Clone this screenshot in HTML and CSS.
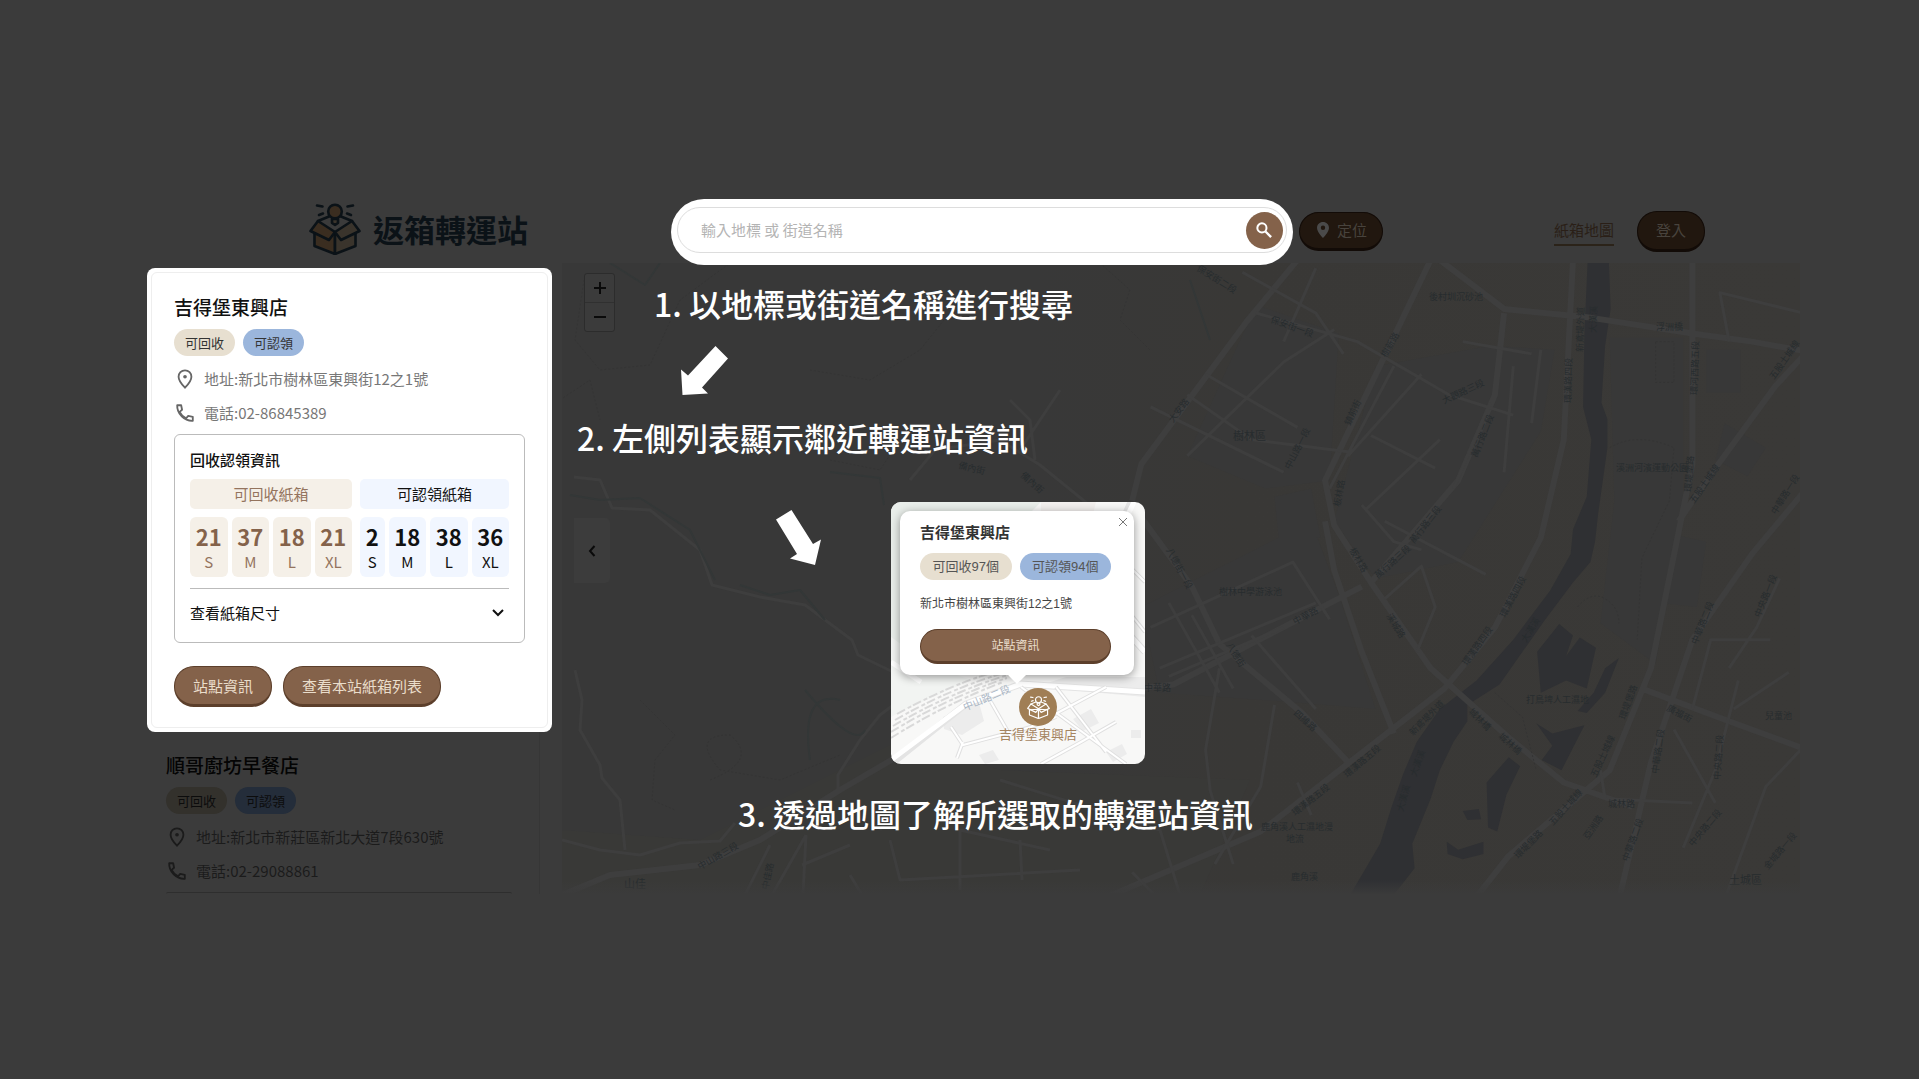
FILE: index.html
```html
<!DOCTYPE html>
<html lang="zh-Hant">
<head>
<meta charset="utf-8">
<meta name="viewport" content="width=device-width, initial-scale=1">
<title>返箱轉運站</title>
<link rel="stylesheet" href="styles.css">
</head>
<body>
<svg class="sprite" aria-hidden="true">
  <symbol id="i-box" viewBox="0 0 52 52">
    <g fill="var(--box-light, none)" stroke="currentColor" stroke-width="2.600" stroke-linejoin="round" stroke-linecap="round">
      <path d="M9 18 20 13.500M43 18 32 13.500" fill="none"/>
      <path d="M5.500 31v12l20.500 8V30z" fill="var(--box-dark, none)"/>
      <path d="M46.500 31v12l-20.500 8V30z"/>
      <path d="M9 18 26 29l-6 8L1.500 28z" fill="var(--box-dark, none)"/>
      <path d="M43 18 26 29l6 8L50.500 28z"/>
      <path d="M23 16v4l3 2 3-2v-4z"/>
      <circle cx="26" cy="8.500" r="6.800" fill="var(--box-dark, none)"/>
      <path d="M8 2.500l5.500 1M10 12l4-1.500M44 2.500l-5.500 1M42 12l-4-1.500" fill="none"/>
    </g>
  </symbol>
  <symbol id="i-pin" viewBox="0 0 24 24">
    <path d="M12 2.500c-4 0-7 3-7 7 0 4.800 7 12 7 12s7-7.200 7-12c0-4-3-7-7-7z" fill="none" stroke="currentColor" stroke-width="2"/>
    <circle cx="12" cy="9.500" r="2" fill="currentColor"/>
  </symbol>
  <symbol id="i-phone" viewBox="0 0 24 24">
    <path d="M3.500 3.500h4.300l1 5-2.700 2.300c1.600 3.200 3.900 5.500 7.100 7.100l2.300-2.700 5 1v4.300C11.500 21 3 12.500 3.500 3.500z" fill="none" stroke="currentColor" stroke-width="2" stroke-linejoin="round"/>
  </symbol>
</svg>

<div class="page">
  <header class="header">
    <a class="logo" href="#">
      <svg class="logo-icon" aria-hidden="true"><use href="#i-box"/></svg>
      <span>返箱轉運站</span>
    </a>
    <form class="search" role="search">
      <div class="search-field">
        <input type="text" aria-label="輸入地標 或 街道名稱" placeholder="輸入地標 或 街道名稱">
        <button class="search-btn" type="button" aria-label="搜尋">
          <svg viewBox="0 0 24 24" aria-hidden="true"><circle cx="9.500" cy="9.500" r="5.500" fill="none" stroke="currentColor" stroke-width="2.400"/><path d="M13.800 13.800 20.500 20.500" stroke="currentColor" stroke-width="2.800"/></svg>
        </button>
      </div>
    </form>
    <button class="btn btn-dim locate" type="button">
      <svg viewBox="0 0 12 16" aria-hidden="true"><path fill="currentColor" fill-rule="evenodd" d="M6 0C2.600 0 0 2.600 0 5.900 0 10 6 16 6 16s6-6 6-10.100C12 2.600 9.400 0 6 0zm0 8a2.200 2.200 0 1 1 0-4.400A2.200 2.200 0 0 1 6 8z"/></svg>
      定位
    </button>
    <nav class="nav">
      <a href="#">紙箱地圖</a>
      <button class="btn btn-dim login" type="button">登入</button>
    </nav>
  </header>

  <main class="main">
    <aside class="sidebar">
      <section class="card">
        <article class="station">
          <h2>吉得堡東興店</h2>
          <div class="tags"><span class="tag tag-sand">可回收</span><span class="tag tag-blue">可認領</span></div>
          <p class="line"><svg aria-hidden="true"><use href="#i-pin"/></svg>地址:新北市樹林區東興街12之1號</p>
          <p class="line"><svg aria-hidden="true"><use href="#i-phone"/></svg>電話:02-86845389</p>
          <div class="stock">
            <h3>回收認領資訊</h3>
            <div class="groups">
              <div class="group sand">
                <h4>可回收紙箱</h4>
                <ul><li><b>21</b>S</li><li><b>37</b>M</li><li><b>18</b>L</li><li><b>21</b>XL</li></ul>
              </div>
              <div class="group sky">
                <h4>可認領紙箱</h4>
                <ul><li><b>2</b>S</li><li><b>18</b>M</li><li><b>38</b>L</li><li><b>36</b>XL</li></ul>
              </div>
            </div>
            <button class="sizes" type="button">查看紙箱尺寸
              <svg viewBox="0 0 12 8" aria-hidden="true"><path d="M1 1l5 5 5-5" fill="none" stroke="currentColor" stroke-width="2"/></svg>
            </button>
          </div>
          <div class="actions">
            <button class="btn" type="button">站點資訊</button>
            <button class="btn" type="button">查看本站紙箱列表</button>
          </div>
        </article>
      </section>
      <article class="station next">
        <h2>順哥廚坊早餐店</h2>
        <div class="tags"><span class="tag tag-sand">可回收</span><span class="tag tag-blue">可認領</span></div>
        <p class="line"><svg aria-hidden="true"><use href="#i-pin"/></svg>地址:新北市新莊區新北大道7段630號</p>
        <p class="line"><svg aria-hidden="true"><use href="#i-phone"/></svg>電話:02-29088861</p>
        <div class="stock-edge"></div>
      </article>
    </aside>

    <section class="map" aria-label="地圖">
      <svg class="map-base" viewBox="562 263 1238 632" preserveAspectRatio="xMinYMin slice" aria-hidden="true">
        <defs>
          <linearGradient id="land"><stop offset="0" stop-color="#383838"/><stop offset=".38" stop-color="#383838"/><stop offset=".55" stop-color="#393836"/><stop offset="1" stop-color="#3a3937"/></linearGradient>
          <linearGradient id="fade" x2="0" y2="1"><stop offset="0" stop-color="#3b3b3b" stop-opacity="0"/><stop offset="1" stop-color="#3b3b3b"/></linearGradient>
        </defs>
        <rect x="562" y="263" width="1238" height="632" fill="url(#land)"/>
        <path d="M562 830 700 840 900 740 1000 770 1250 780 1200 895H562z" fill="#393937"/>
        <!-- built-up areas -->
        <g transform="translate(1100 260) scale(.4592 .4082)" fill="#383838">
          <path d="M340 110 520 180 500 540 360 560 190 480zM600 260 850 210 990 220 960 420 780 740 600 780 510 640zM90 850 460 640 520 820 560 960 600 1100 380 1080 130 1060zM1110 190h160v420l-60 380-120-100 30-300zM1240 670l80 20-20 160-80-10zM1320 220h75v105h-75zM380 580l80-20 20 120-90 10zM1360 400l90 60-40 70-70-40z"/>
        </g>
        <!-- river and wetland -->
        <g transform="translate(1100 260) scale(.4592 .4082)" fill="#2f3033">
          <path d="M1062 0 1055 180 1052 360 1070 440 1060 580 1030 660 1025 720 980 810 900 930 820 1030 740 1100 690 1180 660 1260 635 1340 610 1430 545 1555H640L685 1490 680 1430 720 1320 740 1250 770 1180 800 1130 800 1090 870 1040 920 960 970 880 1030 790 1068 740 1078 690 1085 620 1105 460 1105 390 1092 350 1100 210 1112 120 1108 0z"/>
          <path d="M1000 892 1030 920 1015 970 1045 925 1080 950 1060 1050 1015 1030 960 1060 952 960zM950 1135 985 1160 1055 1140 1005 1250 962 1225 985 1190zM890 1218 915 1240 885 1310 865 1400 845 1390 842 1280zM755 1425 780 1445 835 1425 835 1455 790 1468 757 1455zM1130 975 1100 1000 1075 1060 1040 1105 1060 1110 1100 1060zM790 1350 825 1345 830 1370 800 1372z"/>
        </g>
        <!-- roads, eastern half -->
        <g class="roads" transform="translate(1100 260) scale(.4592 .4082)">
          <path class="major" d="M430 0 320 150 90 500 70 590M70 600 200 800 260 940 440 1110 540 1230M740 0 880 120 1060 140 1290 180 1420 200 1568 230M720 0 520 470 490 540 510 650 590 790 720 1000 890 1170 1010 1280 1160 1340M490 640 510 760 570 960 640 1160M0 1060 160 1040 330 940 570 800M880 130 860 330 780 540 590 790M0 1568 350 1400 750 1050 860 900 960 680 1010 440 1030 0M1290 0 1290 500 1200 1000 1110 1250 890 1460 820 1560M1568 520 1420 720 1290 930 1200 1230 1130 1568M1568 190 1470 310 1340 510 1260 640M1180 1050 1370 1130 1540 1200"/>
          <path d="M190 480 400 250 510 170M110 360 400 520M190 330 330 440 540 470M230 280 430 410M340 130 560 200 760 330 900 380M310 30 470 130 530 230M470 20 400 200M640 260 500 560M790 200 940 230M850 350 770 560M700 280 540 480M590 430 730 510M580 610 740 440M620 640 840 770M570 600 640 690 700 710M620 830 700 750 730 850 690 960M110 900 420 740 500 880M130 1000 470 840M200 870 290 1050M150 840 260 1060M330 920 470 1100M260 1000 230 1200 240 1300 290 1480M380 1090 350 1290 250 1480M900 260 880 520M960 220 940 400M150 1020 400 900M70 1500 130 1568M430 1280 460 1360M1370 200 1350 80 1568 140M1460 930 1330 930 1290 1100M1390 1030 1340 1250 1270 1440M1250 1150 1340 1330M1500 1010 1380 1100M1090 1250 1100 1320 1290 1330M1568 1150 1450 1290 1360 1568M1480 780 1430 900 1370 1000"/>
          <path class="fine" d="M1110 460q60-40 140 0l-10 130-60 140-10 200M1210 200h40v100h-40zM1040 850q30-40 60-20t30 60M860 1060l60 60 30 130"/>
        </g>
        <!-- roads, western half -->
        <g class="roads">
          <path class="major" d="M562 895 610 875 700 865 760 840 840 790 900 755 1000 690 1145 700"/>
          <path d="M574 477 600 480 612 508 650 510 700 550 712 585 760 597 805 605 852 640 858 655 893 672 960 700M575 670 582 700 580 730 600 765 602 778 620 800 625 850M562 840 600 850 640 855 680 843 720 841 735 823M838 790 838 775 860 740 880 715 900 700M806 835 772 895M770 845 745 895M806 835 803 895M802 865 850 845M850 875 862 895M910 480 935 450 1000 440 1040 465 1120 530M1035 460 1030 420 1010 400M1060 390 1020 450M900 800 880 830M1000 780 1160 830 1180 895M960 890 960 830 1050 850M890 840 900 880 1080 870M1020 840 1022 880"/>
          <path class="fine" d="M584 280 575 340 600 370 650 365 680 300 730 263M640 700 675 735 655 760 652 800 675 810M710 780q50-20 20-45-40 0-10 35l60 10 60-25M810 370 870 380 920 350 960 300 1000 290M830 460 880 470 900 440M560 400 590 380 600 420M1100 263 1130 290 1120 320 1150 350"/>
          <path class="stream" d="M610 263 645 285 660 263M570 495 600 500 640 498 690 530 715 580M830 472 880 478 884 505M740 585 770 595 800 590 825 620M840 700q-40-10-30 60M805 690q50 60 60 40M1190 280l20 60"/>
        </g>
        <g class="labels">
          <text x="1429" y="300">後村圳沉砂池</text>
          <text x="1233" y="440" class="district">樹林區</text>
          <text x="1219" y="595">樹林中學游泳池</text>
          <text x="1616" y="471">溪洲河濱運動公園</text>
          <text x="1526" y="703">打鳥埤人工濕地</text>
          <text x="1261" y="830">鹿角溪人工濕地漫</text>
          <text x="1286" y="842">地流</text>
          <text x="1291" y="880">鹿角溪</text>
          <text x="1765" y="719">兒童池</text>
          <text x="1729" y="884" class="district">土城區</text>
          <text x="624" y="888" class="district">山佳</text>
          <text x="1656" y="330">浮洲橋</text>
          <text x="1608" y="807">城林路</text>
          <text x="1144" y="691">中華路</text>
          <text transform="translate(1196 270) rotate(32)">保安街二段</text>
          <text transform="translate(1270 322) rotate(20)">保安街一段</text>
          <text transform="translate(1386 358) rotate(-60)">樹新路</text>
          <text transform="translate(1350 426) rotate(-65)">鎮前街</text>
          <text transform="translate(1173 423) rotate(-52)">大安路</text>
          <text transform="translate(1290 470) rotate(-63)">中山路一段</text>
          <text transform="translate(1444 404) rotate(-25)">大觀路三段</text>
          <text transform="translate(1477 458) rotate(-68)">萬行路二段</text>
          <text transform="translate(1414 544) rotate(-52)">萬行路三段</text>
          <text transform="translate(1378 579) rotate(-42)">萬行路三段</text>
          <text transform="translate(1340 507) rotate(-80)">板林路</text>
          <text transform="translate(1349 550) rotate(60)">板林路</text>
          <text transform="translate(1386 616) rotate(58)">溪城路</text>
          <text transform="translate(1166 550) rotate(62)">八德街一段</text>
          <text transform="translate(1226 645) rotate(58)">八德街</text>
          <text transform="translate(1295 625) rotate(-28)">中華路</text>
          <text transform="translate(1293 714) rotate(42)">四維路</text>
          <text transform="translate(1347 778) rotate(-40)">環漢路五段</text>
          <text transform="translate(1295 816) rotate(-38)">環漢路五段</text>
          <text transform="translate(1413 736) rotate(-45)">新鳶堤外道</text>
          <text transform="translate(1467 666) rotate(-55)">環漢路四段</text>
          <text transform="translate(1505 618) rotate(-62)">環漢路四段</text>
          <text transform="translate(1571 403) rotate(-89)">環漢路四段</text>
          <text transform="translate(1583 352) rotate(-89)">新鳶堤外道</text>
          <text transform="translate(1596 333) rotate(-88)">大漢溪</text>
          <text transform="translate(1526 643) rotate(-58)">大漢溪</text>
          <text transform="translate(1416 777) rotate(-70)">大漢溪</text>
          <text transform="translate(1403 812) rotate(-75)">大漢溪</text>
          <text transform="translate(1468 712) rotate(45)">城林橋</text>
          <text transform="translate(1498 737) rotate(42)">城林橋</text>
          <text transform="translate(1697 395) rotate(-88)">環河西路五段</text>
          <text transform="translate(1691 492) rotate(-86)">環堤堡路</text>
          <text transform="translate(1694 504) rotate(-55)">五股土城線</text>
          <text transform="translate(1774 380) rotate(-55)">五股土城線</text>
          <text transform="translate(1776 515) rotate(-58)">中華路一段</text>
          <text transform="translate(1697 645) rotate(-68)">中華路二段</text>
          <text transform="translate(1760 618) rotate(-68)">中央路一段</text>
          <text transform="translate(1625 720) rotate(-70)">環堤堡路</text>
          <text transform="translate(1596 778) rotate(-65)">五股土城線</text>
          <text transform="translate(1553 826) rotate(-48)">五股土城線</text>
          <text transform="translate(1518 859) rotate(-45)">環堤堡路</text>
          <text transform="translate(1658 774) rotate(-82)">中華路二段</text>
          <text transform="translate(1628 862) rotate(-70)">中華路二段</text>
          <text transform="translate(1666 710) rotate(28)">廣福街</text>
          <text transform="translate(1720 780) rotate(-86)">中央路二段</text>
          <text transform="translate(1693 847) rotate(-50)">中央路二段</text>
          <text transform="translate(1768 870) rotate(-50)">金城路一段</text>
          <text transform="translate(1588 840) rotate(-55)">亞洲路</text>
          <text transform="translate(700 870) rotate(-30)">中山路三段</text>
          <text transform="translate(768 890) rotate(-78)">中佳路</text>
          <text transform="translate(958 468) rotate(14)">備內街</text>
          <text transform="translate(1020 476) rotate(42)">備內街</text>
        </g>
        <rect x="562" y="880" width="1238" height="15" fill="url(#fade)"/>
      </svg>

      <div class="zoom">
        <button type="button" aria-label="放大"><svg viewBox="0 0 12 12"><path d="M6 0v12M0 6h12"/></svg></button>
        <button type="button" aria-label="縮小"><svg viewBox="0 0 12 12"><path d="M0 6h12"/></svg></button>
      </div>
      <button class="collapse" type="button" aria-label="收合列表"><svg viewBox="0 0 8 12"><path d="M6.500 1 2 6l4.500 5"/></svg></button>

      <p class="step step-1">1. 以地標或街道名稱進行搜尋</p>
      <svg class="arrow arrow-1" viewBox="0 0 48 49" aria-hidden="true"><path d="M34.500 0 47 12.500 21 41.500 27 47.500 1.500 49 0 23.500 7 29.500z"/></svg>
      <p class="step step-2">2. 左側列表顯示鄰近轉運站資訊</p>
      <svg class="arrow arrow-2" viewBox="0 0 45 55" aria-hidden="true"><path d="M15.500 0 0 9.500 21 44 14 48.500 39 55 45 29.500 37 34z"/></svg>
      <p class="step step-3">3. 透過地圖了解所選取的轉運站資訊</p>

      <div class="preview">
        <svg class="preview-map" viewBox="0 0 254 262" aria-hidden="true">
          <rect width="254" height="262" fill="#f8f8f7"/>
          <path d="M0 0h150l-30 30L50 150 0 215z" fill="#e9eeea"/>
          <path d="M0 135Q40 165 80 178L20 205 0 215z" fill="#f2f4f2"/>
          <path d="M150 0h55l-5 20h-50z" fill="#f3f0ee"/>
          <path d="M175 175h79v20l-110-10zM52 215l35-18 6 22-22 14-18-6zM182 217l18-10 8 14-16 8zM215 250l16-8 5 10-14 8zM88 253l14-5 6 10-14 4zM240 228h10v8h-10z" fill="#ececec"/>
          <g fill="none" stroke="#e4e4e4" stroke-width="7"><path d="M0 262 75 202 130 182 254 190M240 0 200 90 254 150"/></g>
          <g fill="none" stroke="#fff" stroke-width="5"><path d="M0 258 75 202 130 182 254 190M243 0 200 90 254 150M0 160 30 180"/></g>
          <g fill="none" stroke="#e0e0e0" stroke-width="4"><path d="M130 185 235 262M60 225 72 243 140 225 165 215M72 240 66 256M165 185 215 250M140 225 215 185M150 262 190 240 225 220M100 200 120 235M234 60 254 80M230 100 254 130"/></g>
          <g fill="none" stroke="#fff" stroke-width="2"><path d="M130 185 235 262M60 225 72 243 140 225 165 215M72 240 66 256M165 185 215 250M140 225 215 185M150 262 190 240 225 220M100 200 120 235M234 60 254 80M230 100 254 130"/></g>
          <path d="M2 224Q60 190 120 172M6 212Q60 182 110 168M0 236Q50 204 112 180M4 218Q60 186 116 170M0 230Q56 196 116 176" fill="none" stroke="#d9d9d9" stroke-width="2" stroke-dasharray="9 3 4 2"/>
          <text transform="translate(74 209) rotate(-23)" class="road-name">中山路二段</text>
        </svg>
        <div class="popup">
          <button class="close" type="button" aria-label="關閉"><svg viewBox="0 0 8 8"><path d="M0 0l8 8M8 0 0 8"/></svg></button>
          <h2>吉得堡東興店</h2>
          <div class="tags"><span class="tag tag-sand">可回收97個</span><span class="tag tag-blue">可認領94個</span></div>
          <p>新北市樹林區東興街12之1號</p>
          <button class="btn" type="button">站點資訊</button>
        </div>
        <div class="marker">
          <span class="marker-dot"><svg aria-hidden="true"><use href="#i-box"/></svg></span>
          吉得堡東興店
        </div>
      </div>
    </section>
  </main>
</div>
</body>
</html>
```

FILE: styles.css
```css
:root {
  --shade: #3b3b3b;
  --brown: #84624a;
  --brown-dark: #5c3f2b;
  --cream: #eaddcb;
  --sand: #e7dfd0;
  --blue: #9bb6dc;
}

* { box-sizing: border-box; }

body {
  margin: 0;
  min-height: 100vh;
  background: var(--shade);
  color: #111;
  font: 15px/24px "Noto Sans CJK TC", "Noto Sans", sans-serif;
}

h2, h3, h4, p, ul { margin: 0; padding: 0; font-weight: 400; }
ul { list-style: none; }
button, input { font: inherit; }
button { border: 0; padding: 0; background: none; color: inherit; }
.sprite { position: absolute; width: 0; height: 0; }

.page { padding: 199px 119px 0 147px; }

/* Buttons */
.btn {
  height: 41px;
  padding: 0 18px;
  border: 1px solid var(--brown-dark);
  border-bottom-width: 3px;
  border-radius: 20px;
  background: var(--brown);
  color: var(--cream);
  white-space: nowrap;
}
.btn-dim { border-color: #120b07; background: #21170f; color: #48433d; }

/* Header */
.header { position: relative; z-index: 1; display: flex; align-items: center; height: 64px; padding: 0 95px 0 162px; }
.logo {
  display: flex;
  align-items: center;
  gap: 12px;
  width: 362px;
  height: 56px;
  padding-bottom: 4px;
  color: #0b1217;
  font-size: 31px;
  font-weight: 700;
  line-height: 48px;
  text-decoration: none;
}
.logo-icon { width: 52px; height: 52px; --box-dark: #3a2d20; --box-light: #3a342c; }

.search {
  flex: 1;
  align-self: flex-start;
  height: 66px;
  padding: 8px 6px 12px;
  border-radius: 33px;
  background: #fff;
}
.search-field {
  display: flex;
  align-items: center;
  height: 46px;
  padding: 0 3px 0 23px;
  border: 1px solid #ddd;
  border-radius: 23px;
}
.search-field input { flex: 1; min-width: 0; border: 0; padding: 0; outline: 0; background: none; }
.search-field input::placeholder { color: #b4b4b4; opacity: 1; }
.search-btn { display: grid; place-items: center; width: 37px; height: 37px; border-radius: 50%; background: var(--brown); color: #fff; }
.search-btn svg { width: 20px; height: 20px; }

.locate { display: flex; align-items: center; gap: 8px; height: 39px; margin-left: 6px; padding: 0 15px 0 17px; }
.locate svg { width: 12px; height: 16px; color: #4a4a4a; }

.nav { display: flex; align-items: center; gap: 23px; margin-left: 171px; }
.nav a { border-bottom: 2px solid #2b2319; color: #2a1f17; line-height: 28px; text-decoration: none; white-space: nowrap; }

/* Layout */
.main { display: flex; gap: 10px; }
.sidebar { flex: none; width: 405px; padding-top: 5px; }
.map { position: relative; flex: 1; min-width: 0; overflow: hidden; }

/* Station cards */
.card { padding: 4px; border-radius: 8px; background: #fff; }
.card .station { padding: 20px 22px; border: 1px solid #eee; border-radius: 6px; }
.station h2 { color: #111; font-size: 19px; font-weight: 500; line-height: 28px; }
.tags { display: flex; gap: 8px; margin-top: 8px; }
.tag { height: 27px; padding: 0 11px; border-radius: 14px; color: #333; font-size: 13px; line-height: 27px; }
.tag-sand { background: var(--sand); }
.tag-blue { background: var(--blue); }
.line { display: flex; align-items: center; gap: 8px; margin-top: 10px; color: #777; }
.line svg { width: 22px; height: 22px; color: #666; }
.tags + .line { margin-top: 11px; }

.stock { margin-top: 9px; padding: 13px 15px 17px; border: 1px solid #bbb; border-radius: 6px; }
.stock h3 { font-size: 15px; font-weight: 500; }
.groups { display: flex; gap: 8px; margin-top: 7px; padding-bottom: 11px; border-bottom: 1px solid #bbb; }
.group { flex: auto; text-align: center; }
.group h4 { border-radius: 5px; font-size: 15px; line-height: 30px; }
.group ul { display: flex; gap: 4px; margin-top: 8px; }
.group li { flex: auto; height: 60px; padding: 5px 5px 0; border-radius: 6px; }
.group b { display: block; font-size: 22px; line-height: 28px; }
.sand h4, .sand li { background: #f5f0e8; color: #94745e; }
.sand b { color: #84624a; }
.sky h4, .sky li { background: #f1f6ff; }
.sizes { display: flex; align-items: center; justify-content: space-between; width: 100%; margin-top: 12px; padding-right: 5px; }
.sizes svg { width: 12px; height: 8px; }
.actions { display: flex; gap: 11px; margin-top: 23px; }

.next { margin-right: 12px; padding: 19px 27px 0 19px; border-right: 1px solid #363636; }
.next h2 { color: #040404; }
.next .tag { color: #0c0c0c; }
.next .tag-sand { background: #33312c; }
.next .tag-blue { background: #242d3a; }
.next .line, .next .line svg { color: #1b1b1b; }
.stock-edge { height: 2px; margin-top: 9px; border-top: 1px solid #2e2e2e; border-radius: 6px 6px 0 0; }

/* Map */
.map-base { position: absolute; inset: 0; width: 100%; height: 100%; }
.roads { fill: none; stroke: #3e3e3e; stroke-width: 3; stroke-linejoin: round; }
.roads path { vector-effect: non-scaling-stroke; }
.roads .major { stroke-width: 6; }
.roads .fine { stroke: #343434; stroke-width: 1; stroke-dasharray: 2 2; }
.roads .stream { stroke: #333737; stroke-width: 2; }
.labels { fill: #272c2e; font-size: 9px; }
.labels .district { font-size: 11px; }

.zoom { position: absolute; left: 22px; top: 10px; width: 31px; border: 1px solid #2c2c2c; border-radius: 3px; background: #3b3b3b; }
.zoom button { display: grid; place-items: center; width: 100%; height: 28px; }
.zoom button + button { height: 29px; border-top: 1px solid #303030; }
.zoom svg { width: 12px; height: 12px; }
.zoom path, .collapse path, .close path { fill: none; stroke: #0a0a0a; stroke-width: 2; }
.collapse { position: absolute; left: 12px; top: 255px; display: grid; place-items: center; width: 36px; height: 65px; border-radius: 0 5px 5px 0; background: #3c3c3c; }
.collapse svg { width: 8px; height: 12px; }

/* Guide annotations */
.step { position: absolute; color: #fff; font-size: 32px; font-weight: 500; line-height: 40px; white-space: nowrap; }
.step-1 { left: 92px; top: 20px; }
.step-2 { left: 15px; top: 154px; }
.step-3 { left: 176px; top: 530px; }
.arrow { position: absolute; fill: #fff; }
.arrow-1 { left: 119px; top: 83px; width: 48px; height: 49px; }
.arrow-2 { left: 214px; top: 247px; width: 45px; height: 55px; }

.preview {
  position: absolute;
  left: 329px;
  top: 239px;
  width: 254px;
  height: 262px;
  overflow: hidden;
  border-radius: 10px;
  font-family: "Liberation Sans", "Noto Sans CJK TC", sans-serif;
}
.preview-map { position: absolute; inset: 0; width: 100%; height: 100%; }
.road-name { fill: #a9b5c4; font-size: 10px; }
.popup {
  position: relative;
  margin: 9px 11px 0 9px;
  padding: 12px 23px 11px 20px;
  border-radius: 10px;
  background: #fff;
  box-shadow: 0 2px 10px rgba(0, 0, 0, .4);
}
.popup::after {
  content: "";
  position: absolute;
  left: 108px;
  top: 100%;
  border: 9px solid transparent;
  border-top-color: #fff;
  border-bottom: 0;
}
.popup h2 { color: #333; font-size: 15px; font-weight: 700; line-height: 20px; }
.popup .tags { gap: 8px; margin-top: 10px; }
.popup .tag { flex: 1; padding: 0; color: #555; text-align: center; }
.popup p { margin-top: 12px; color: #444; font-size: 12px; }
.popup .btn { width: 100%; height: 35px; margin-top: 13px; font-size: 12px; line-height: 30px; }
.close { position: absolute; right: 6px; top: 6px; display: grid; place-items: center; width: 10px; height: 10px; }
.close svg { width: 8px; height: 8px; }
.close path { stroke: #777; stroke-width: 1; }
.marker { position: absolute; left: 108px; top: 186px; display: flex; flex-direction: column; align-items: center; color: #a58460; font-size: 13px; line-height: 18px; }
.marker-dot { display: grid; place-items: center; width: 38px; height: 38px; border-radius: 50%; background: #a07e55; color: #fff; }
.marker-dot svg { width: 23px; height: 23px; }
```
